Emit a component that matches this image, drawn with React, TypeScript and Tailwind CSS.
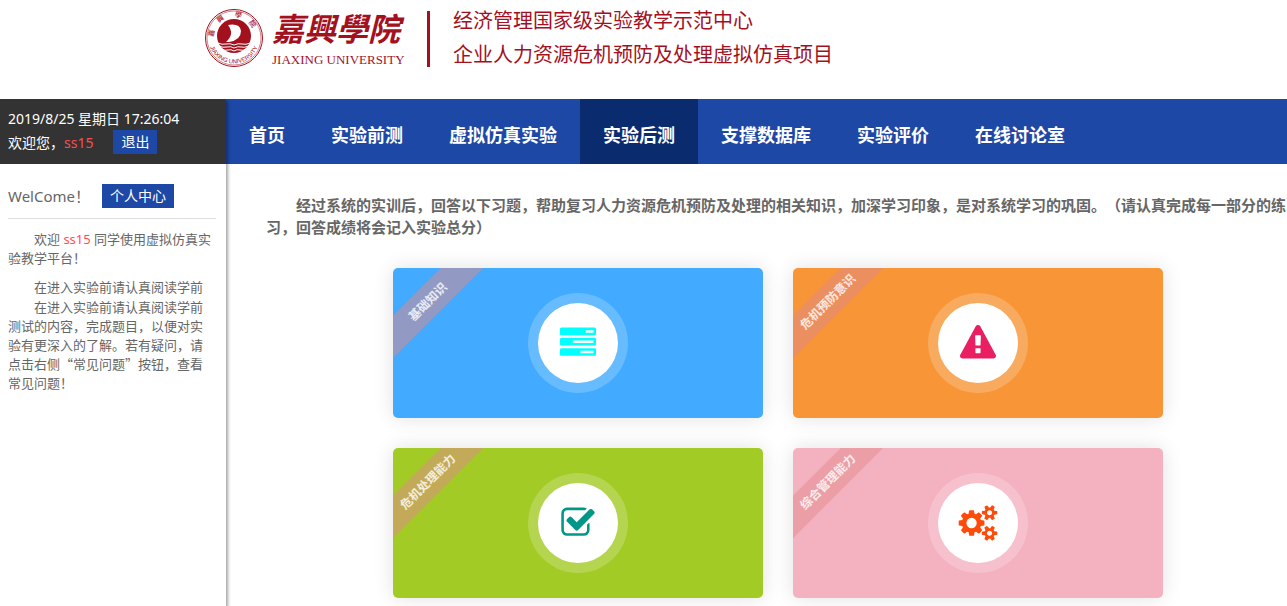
import type { ReactNode } from 'react';

const NAV_ITEMS = ['首页', '实验前测', '虚拟仿真实验', '实验后测', '支撑数据库', '实验评价', '在线讨论室'];
const ACTIVE_ITEM = '实验后测';

function Icon({ box, className, children }: { box: string; className: string; children: ReactNode }) {
  return (
    <svg viewBox={box} fill="currentColor" className={`h-9 ${className}`} aria-hidden="true">
      {children}
    </svg>
  );
}

function TasksIcon() {
  return (
    <Icon box="0 0 1792 1792" className="w-9 text-[#00ffff]">
      <path d="M1024 1408h640v-128h-640v128zm-384-512h1024v-128h-1024v128zm640-512h384v-128h-384v128zm512 832v256q0 26-19 45t-45 19h-1664q-26 0-45-19t-19-45v-256q0-26 19-45t45-19h1664q26 0 45 19t19 45zm0-512v256q0 26-19 45t-45 19h-1664q-26 0-45-19t-19-45v-256q0-26 19-45t45-19h1664q26 0 45 19t19 45zm0-512v256q0 26-19 45t-45 19h-1664q-26 0-45-19t-19-45v-256q0-26 19-45t45-19h1664q26 0 45 19t19 45z" />
    </Icon>
  );
}

function WarningIcon() {
  return (
    <Icon box="0 0 1792 1792" className="w-9 text-[#e91e63]">
      <path d="M1024 1375v-190q0-14-9.5-23.5t-22.5-9.5h-192q-13 0-22.5 9.5t-9.5 23.5v190q0 14 9.5 23.5t22.5 9.5h192q13 0 22.5-9.5t9.5-23.5zm-2-374l18-459q0-12-10-19-13-11-24-11h-220q-11 0-24 11-10 7-10 21l17 457q0 10 10 16.5t24 6.5h185q14 0 23.5-6.5t10.5-16.5zm-14-934l768 1408q35 63-2 126-17 29-46.5 46t-63.5 17h-1536q-34 0-63.5-17t-46.5-46q-37-63-2-126l768-1408q17-31 47-49t65-18 65 18 47 49z" />
    </Icon>
  );
}

function CheckIcon() {
  return (
    <Icon box="0 0 1792 1792" className="w-9 text-[#009688]">
      <path d="M1472 930v318q0 119-84.5 203.5t-203.5 84.5h-832q-119 0-203.5-84.5t-84.5-203.5v-832q0-119 84.5-203.5t203.5-84.5h832q63 0 117 25 15 7 18 23 3 17-9 29l-49 49q-10 10-23 10-3 0-9-2-23-6-45-6h-832q-66 0-113 47t-47 113v832q0 66 47 113t113 47h832q66 0 113-47t47-113v-254q0-13 9-22l64-64q10-10 23-10 6 0 12 3 20 8 20 29zm231-489l-814 814q-24 24-57 24t-57-24l-430-430q-24-24-24-57t24-57l110-110q24-24 57-24t57 24l263 263 647-647q24-24 57-24t57 24l110 110q24 24 24 57t-24 57z" />
    </Icon>
  );
}

function CogsIcon() {
  return (
    <Icon box="0 0 1920 1792" className="w-10 text-[#ff4b0a]">
      <path d="M896 896q0-106-75-181t-181-75-181 75-75 181 75 181 181 75 181-75 75-181zm768 512q0-52-38-90t-90-38-90 38-38 90q0 53 37.5 90.5t90.5 37.5 90.5-37.5 37.5-90.5zm0-1024q0-52-38-90t-90-38-90 38-38 90q0 53 37.5 90.5t90.5 37.5 90.5-37.5 37.5-90.5zm-384 421v185q0 10-7 19.5t-16 10.5l-155 24q-11 35-32 76 34 48 90 115 7 11 7 20 0 12-7 19-23 30-82.5 89.5t-78.5 59.5q-11 0-21-7l-115-90q-37 19-77 31-11 108-23 155-7 24-30 24h-186q-11 0-20-7.5t-10-17.5l-23-153q-34-10-75-31l-118 89q-7 7-20 7-11 0-21-8-144-133-144-160 0-9 7-19 10-14 41-53t47-61q-23-44-35-82l-152-24q-10-1-17-9.5t-7-19.5v-185q0-10 7-19.5t16-10.5l155-24q11-35 32-76-34-48-90-115-7-11-7-20 0-12 7-20 22-30 82-89t79-59q11 0 21 7l115 90q34-18 77-32 11-108 23-154 7-24 30-24h186q11 0 20 7.5t10 17.5l23 153q34 10 75 31l118-89q8-7 20-7 11 0 21 8 144 133 144 160 0 8-7 19-12 16-42 54t-45 60q23 48 34 82l152 23q10 2 17 10.5t7 19.5zm640 533v140q0 16-149 31-12 27-30 52 51 113 51 138 0 4-4 7-122 71-124 71-8 0-46-47t-52-68q-20 2-30 2t-30-2q-14 21-52 68t-46 47q-2 0-124-71-4-3-4-7 0-25 51-138-18-25-30-52-149-15-149-31v-140q0-16 149-31 13-29 30-52-51-113-51-138 0-4 4-7 4-2 35-20t59-34 30-16q8 0 46 46.5t52 67.5q20-2 30-2t30 2q51-71 92-112l6-2q4 0 124 70 4 3 4 7 0 25-51 138 17 23 30 52 149 15 149 31zm0-1024v140q0 16-149 31-12 27-30 52 51 113 51 138 0 4-4 7-122 71-124 71-8 0-46-47t-52-68q-20 2-30 2t-30-2q-14 21-52 68t-46 47q-2 0-124-71-4-3-4-7 0-25 51-138-18-25-30-52-149-15-149-31v-140q0-16 149-31 13-29 30-52-51-113-51-138 0-4 4-7 4-2 35-20t59-34 30-16q8 0 46 46.5t52 67.5q20-2 30-2t30 2q51-71 92-112l6-2q4 0 124 70 4 3 4 7 0 25-51 138 17 23 30 52 149 15 149 31z" />
    </Icon>
  );
}

const CARDS = [
  { title: '基础知识', bg: 'bg-[#42aaff]', icon: <TasksIcon /> },
  { title: '危机预防意识', bg: 'bg-[#f79537]', icon: <WarningIcon /> },
  { title: '危机处理能力', bg: 'bg-[#a3cb26]', icon: <CheckIcon /> },
  { title: '综合管理能力', bg: 'bg-[#f4b2c0]', icon: <CogsIcon /> },
];

const RIM_CHARS = [
  { char: '嘉', offset: 5 },
  { char: '興', offset: 20 },
  { char: '學', offset: 37 },
  { char: '院', offset: 52 },
];

// University seal: double ring, sail over waves, name around the rim
function Seal() {
  return (
    <svg viewBox="0 0 60 60" className="size-[60px] text-[#a3111f]" aria-hidden="true">
      <defs>
        <path id="rim-top" d="M10 34 A20.5 20.5 0 1 1 50 34" />
        <path id="rim-bottom" d="M4.500 30 A25.500 25.500 0 0 0 55.500 30" />
      </defs>
      <circle cx="30" cy="30" r="28.500" fill="none" stroke="currentColor" strokeWidth="1" />
      <circle cx="30" cy="30" r="27" fill="none" stroke="currentColor" strokeWidth="0.500" />
      <circle cx="30" cy="28" r="17" fill="currentColor" />
      <path d="M24 17 Q36 15 37 23 Q37 32 25 34 L22 34 Q31 26 24 17z" fill="#fff" />
      <path
        d="M14 35q4 2 8 1t8 1q4-2 8-1t8-1M15 38q4 2 8 1t7 1q4-2 7-1t8-1M18 41q3 2 6 1t6 1q3-2 6-1t6-1"
        fill="none"
        stroke="#fff"
        strokeWidth="1"
      />
      <g fill="currentColor">
        {RIM_CHARS.map(({ char, offset }) => (
          <text key={char} fontSize="7" fontWeight="500" fontFamily="Noto Sans CJK SC, sans-serif">
            <textPath href="#rim-top" startOffset={offset}>{char}</textPath>
          </text>
        ))}
        <text fontSize="6" fontFamily="Liberation Sans, sans-serif" textAnchor="middle">
          <textPath href="#rim-bottom" startOffset="50%">JIAXING UNIVERSITY</textPath>
        </text>
      </g>
    </svg>
  );
}

function Header() {
  return (
    <header className="flex h-[99px] items-start pl-[204px] pt-2 text-[#a3111f]">
      <Seal />
      <div className="ml-2 w-[129px] whitespace-nowrap">
        <div className="h-[42px] text-[32px]/[42px] font-bold italic">嘉興學院</div>
        <div className="font-['Liberation_Serif',serif] text-[13px]/[20px]">JIAXING UNIVERSITY</div>
      </div>
      <div className="ml-[26px] mt-[3px] h-14 w-[3px] bg-[#a3111f]" />
      <div className="ml-[23px] whitespace-nowrap text-[20px]/[34px]">
        <p className="-mt-1">经济管理国家级实验教学示范中心</p>
        <p>企业人力资源危机预防及处理虚拟仿真项目</p>
      </div>
    </header>
  );
}

function Sidebar() {
  return (
    <aside className="z-10 w-[226px] shrink-0 bg-white shadow-[2px_2px_3px_rgba(0,0,0,0.35)]">
      <div className="h-[65px] bg-[#333] px-2 pt-2 text-[14px]/[24px] text-white">
        <p>2019/8/25 星期日 17:26:04</p>
        <div className="flex">
          <span>
            欢迎您，<span className="text-[#ff4d4d]">ss15</span>
          </span>
          <button className="-mt-px ml-5 h-6 bg-[#1e48a5] px-2">退出</button>
        </div>
      </div>

      <div className="ml-2 mr-[10px] flex h-[55px] items-end border-b border-[#ddd] pb-[10px] text-[#666]">
        <span className="w-[94px] text-[15px]/[24px]">WelCome！</span>
        <button className="h-6 bg-[#1e48a5] px-2 text-[14px]/[24px] text-white">个人中心</button>
      </div>

      <div className="px-2 pr-3 pt-[11px] text-[13px]/[19px] text-[#666]">
        <p className="mb-[10px] indent-[2em]">
          欢迎 <span className="text-[#ff4d4d]">ss15</span> 同学使用虚拟仿真实验教学平台！
        </p>
        <p className="indent-[2em]">在进入实验前请认真阅读学前</p>
        {/* CJK face first, so the curly quotes take a full em */}
        <p className="indent-[2em] font-['Noto_Sans_CJK_SC',sans-serif]">
          在进入实验前请认真阅读学前测试的内容，完成题目，以便对实验有更深入的了解。若有疑问，请点击右侧“常见问题”按钮，查看常见问题！
        </p>
      </div>
    </aside>
  );
}

export default function App() {
  return (
    <div
      lang="zh-CN"
      className="flex min-h-screen flex-col overflow-x-hidden bg-white font-['Noto_Sans','Noto_Sans_CJK_SC',sans-serif] [text-spacing-trim:space-all]"
    >
      <Header />

      <div className="flex flex-1 overflow-hidden">
        <Sidebar />

        <div className="min-w-0 flex-1">
          <nav className="flex h-[65px] bg-[#1e48a5]">
            {NAV_ITEMS.map((item) => (
              <a
                key={item}
                href="#"
                className={`shrink-0 px-[23px] pt-1 text-[18px]/[64px] font-bold text-white ${
                  item === ACTIVE_ITEM ? 'h-full bg-[#0b2b6f]' : 'hover:bg-[#0b2b6f]'
                }`}
              >
                {item}
              </a>
            ))}
          </nav>

          <main className="pl-10 pt-[30px]">
            <p className="indent-[2em] text-[15px]/[22px] font-bold text-[#666]">
              经过系统的实训后，回答以下习题，帮助复习人力资源危机预防及处理的相关知识，加深学习印象，是对系统学习的巩固。（请认真完成每一部分的练习，回答成绩将会记入实验总分）
            </p>

            <div className="mt-[30px] flex flex-wrap justify-center gap-[30px] pb-2 pl-[3px]">
              {CARDS.map((card) => (
                <a
                  key={card.title}
                  href="#"
                  className="w-[370px] rounded-[5px] shadow-[0_0_20px_rgba(0,0,0,0.12)]"
                >
                  <div className={`relative flex h-[150px] items-center justify-center overflow-hidden rounded-[5px] ${card.bg}`}>
                    <span className="absolute -left-[45px] top-[19px] w-40 -rotate-45 bg-[#e28a89]/50 text-center text-[12px]/[30px] font-bold text-white/80">
                      {card.title}
                    </span>
                    <span className="flex size-[100px] items-center justify-center rounded-full bg-white/20">
                      <span className="flex size-20 items-center justify-center rounded-full bg-white">
                        {card.icon}
                      </span>
                    </span>
                  </div>
                </a>
              ))}
            </div>
          </main>
        </div>
      </div>
    </div>
  );
}
